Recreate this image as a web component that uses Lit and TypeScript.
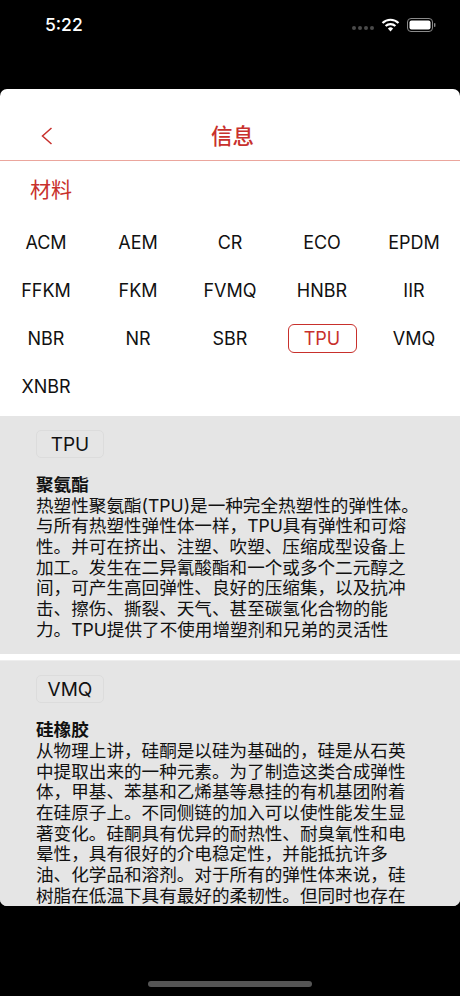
import { LitElement, html, css } from "lit";
import { customElement } from "lit/decorators.js";

const MATERIALS = [
  "ACM", "AEM", "CR", "ECO", "EPDM",
  "FFKM", "FKM", "FVMQ", "HNBR", "IIR",
  "NBR", "NR", "SBR", "TPU", "VMQ",
  "XNBR",
];

const CARDS = [
  {
    code: "TPU",
    name: "聚氨酯",
    lines: [
      "热塑性聚氨酯(TPU)是一种完全热塑性的弹性体。",
      "与所有热塑性弹性体一样，TPU具有弹性和可熔",
      "性。并可在挤出、注塑、吹塑、压缩成型设备上",
      "加工。发生在二异氰酸酯和一个或多个二元醇之",
      "间，可产生高回弹性、良好的压缩集，以及抗冲",
      "击、擦伤、撕裂、天气、甚至碳氢化合物的能",
      "力。TPU提供了不使用增塑剂和兄弟的灵活性",
    ],
  },
  {
    code: "VMQ",
    name: "硅橡胶",
    lines: [
      "从物理上讲，硅酮是以硅为基础的，硅是从石英",
      "中提取出来的一种元素。为了制造这类合成弹性",
      "体，甲基、苯基和乙烯基等悬挂的有机基团附着",
      "在硅原子上。不同侧链的加入可以使性能发生显",
      "著变化。硅酮具有优异的耐热性、耐臭氧性和电",
      "晕性，具有很好的介电稳定性，并能抵抗许多",
      "油、化学品和溶剂。对于所有的弹性体来说，硅",
      "树脂在低温下具有最好的柔韧性。但同时也存在",
    ],
  },
];

@customElement("app-root")
export class AppRoot extends LitElement {
  static styles = css`
    :host {
      display: block;
      width: 460px;
      height: 996px;
      background: #000;
      overflow: hidden;
      font-family: "Inter", "Noto Sans CJK SC", sans-serif;
      color: #111;
    }
    .status {
      height: 89px;
      box-sizing: border-box;
      padding: 14px 24px 0 45px;
      display: flex;
      align-items: flex-start;
      justify-content: space-between;
      color: #fff;
    }
    .time {
      font-size: 17.5px;
      font-weight: 500;
      line-height: 22px;
    }
    .status-icons {
      display: flex;
      align-items: center;
      gap: 7px;
      height: 22px;
    }
    .dots {
      display: flex;
      gap: 2px;
      margin-top: 5px;
    }
    .dots span {
      width: 4px;
      height: 4px;
      border-radius: 50%;
      background: #4a4a4a;
    }
    .sheet {
      height: 817px;
      background: #fff;
      border-radius: 7px;
      overflow: hidden;
    }
    .header {
      height: 72px;
      box-sizing: border-box;
      border-bottom: 1px solid #eba69d;
      display: grid;
      grid-template-columns: 1fr auto 1fr;
      align-items: center;
      padding: 22px 0 0 5px;
    }
    .back {
      display: block;
      margin-left: 35px;
    }
    .title {
      font-size: 21.5px;
      font-weight: 500;
      color: #c8302c;
      line-height: 30px;
    }
    .section {
      height: 57px;
      box-sizing: border-box;
      padding: 15px 0 0 30px;
      font-size: 21px;
      line-height: 28px;
      color: #c8302c;
    }
    .grid {
      display: grid;
      grid-template-columns: repeat(5, 92px);
      grid-auto-rows: 48px;
      margin-bottom: 6px;
    }
    .item {
      display: flex;
      align-items: center;
      justify-content: center;
      font-size: 18px;
    }
    .item.on span {
      width: 69px;
      height: 29px;
      box-sizing: border-box;
      border: 1px solid #c8302c;
      border-radius: 6px;
      color: #c8302c;
      display: flex;
      align-items: center;
      justify-content: center;
    }
    .card {
      background: #e5e5e5;
      padding: 14px 36px;
      margin-bottom: 6px;
    }
    .card + .card {
      border-top: 1px solid #eeeeee;
    }
    .badge {
      width: 68px;
      height: 28px;
      box-sizing: border-box;
      border: 1px solid #dcdcdc;
      border-radius: 5px;
      display: flex;
      align-items: center;
      justify-content: center;
      font-size: 19px;
      margin-bottom: 17px;
    }
    .text {
      font-size: 17.6px;
      line-height: 20.67px;
      white-space: nowrap;
    }
    .name {
      font-weight: 700;
    }
    .home {
      width: 164px;
      height: 6px;
      border-radius: 3px;
      background: #555;
      margin: 75px auto 0;
    }
  `;

  render() {
    return html`
      <div class="status">
        <div class="time">5:22</div>
        <div class="status-icons">
          <div class="dots"><span></span><span></span><span></span><span></span></div>
          <svg width="19" height="14" viewBox="0 0 19 14">
            <path d="M1.5 5 A11.5 11.5 0 0 1 17.5 5" fill="none" stroke="#fff" stroke-width="2.2" />
            <path d="M4.6 8 A7.2 7.2 0 0 1 14.4 8" fill="none" stroke="#fff" stroke-width="2.2" />
            <path d="M9.5 13.5 L6.9 10.6 A3.7 3.7 0 0 1 12.1 10.6 Z" fill="#fff" />
          </svg>
          <svg width="29" height="14" viewBox="0 0 29 14">
            <rect x="0.5" y="0.5" width="25" height="13" rx="3.5" fill="none" stroke="#8a8a8a" />
            <rect x="2.5" y="2.5" width="21" height="9" rx="2" fill="#fff" />
            <rect x="27" y="5" width="1.4" height="4" rx="0.7" fill="#8a8a8a" />
          </svg>
        </div>
      </div>
      <div class="sheet">
        <div class="header">
          <svg class="back" width="14" height="18" viewBox="0 0 14 18">
            <path d="M11.5 1 L2.5 9 L11.5 17" fill="none" stroke="#c8302c" stroke-width="1.5" />
          </svg>
          <div class="title">信息</div>
          <div></div>
        </div>
        <div class="section">材料</div>
        <div class="grid">
          ${MATERIALS.map(
            (m) => html`<div class="item ${m === "TPU" ? "on" : ""}"><span>${m}</span></div>`
          )}
        </div>
        ${CARDS.map(
          (c) => html`
            <div class="card">
              <div class="badge">${c.code}</div>
              <div class="text">
                <div class="name">${c.name}</div>
                ${c.lines.map((l) => html`<div>${l}</div>`)}
              </div>
            </div>
          `
        )}
      </div>
      <div class="home"></div>
    `;
  }
}
